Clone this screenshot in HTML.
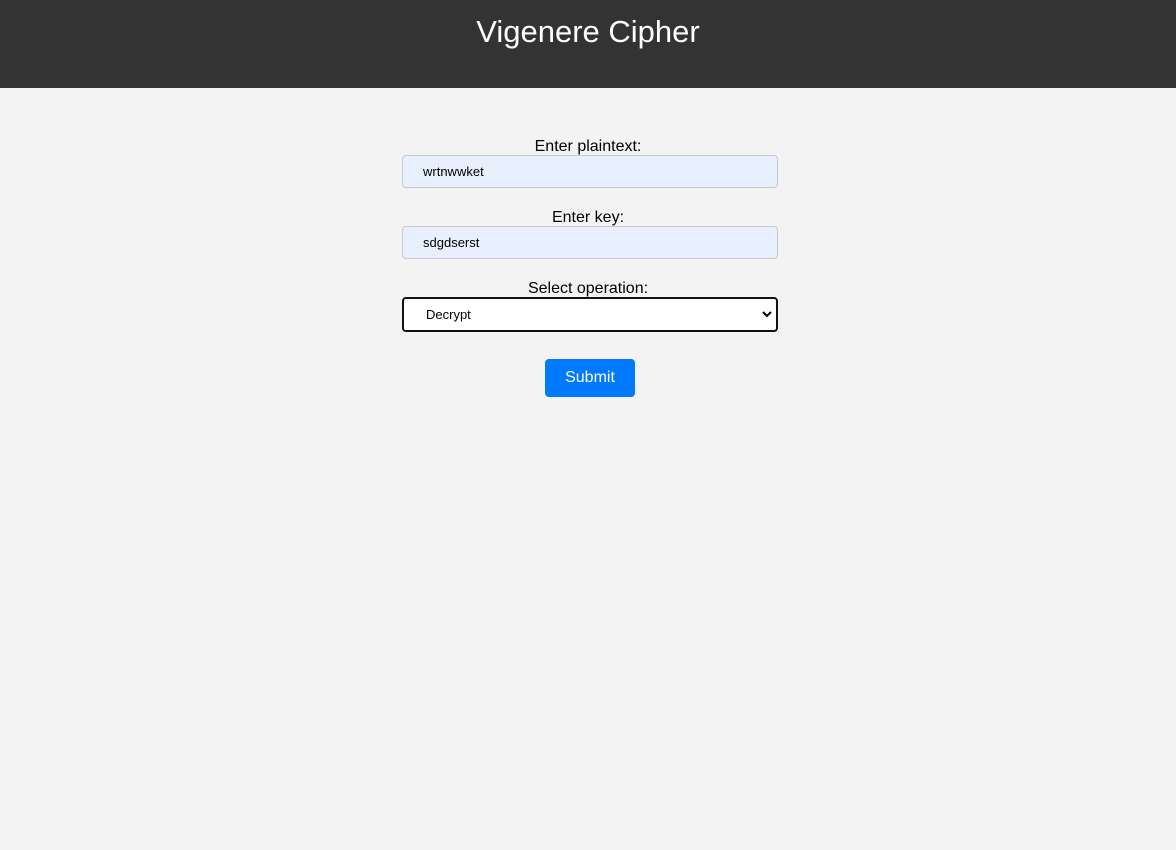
<!DOCTYPE html>
<html><head><meta charset="utf-8"><style>
body{margin:0;background:#f3f3f3;font-family:"Liberation Sans",sans-serif;width:1176px;height:850px;position:relative;overflow:hidden}
header{position:absolute;left:0;top:0;width:1176px;height:88px;background:#333;color:#fff;text-align:center;font-size:31px;line-height:64px}
.lbl{position:absolute;left:0;width:1176px;text-align:center;font-size:16px;color:#000}
.box{position:absolute;left:402px;width:374px;height:31px;background:#e8f0fe;border:1px solid #c8c8c8;border-radius:4px;font-size:13px;line-height:31px;text-indent:20px;color:#000}
.sel{position:absolute;left:402px;top:297px;width:372px;height:31px;background:#fff;border:2px solid #111;border-radius:4px;font-size:13px;line-height:31px;text-indent:22px}
.btn{position:absolute;left:545px;top:359px;width:90px;height:38px;background:#007bff;color:#fff;border-radius:4px;text-align:center;line-height:38px;font-size:16px}
</style></head><body>
<header>Vigenere Cipher</header>
<div class="lbl" style="top:138px">Enter plaintext:</div>
<div class="box" style="top:155px">wrtnwwket</div>
<div class="lbl" style="top:209px">Enter key:</div>
<div class="box" style="top:226px">sdgdserst</div>
<div class="lbl" style="top:280px">Select operation:</div>
<div class="sel">Decrypt<svg style="position:absolute;right:4px;top:12px" width="10" height="7" viewBox="0 0 10 7"><path d="M1 1L5 5L9 1" stroke="#000" stroke-width="2" fill="none"/></svg></div>
<div class="btn">Submit</div>
</body></html>
